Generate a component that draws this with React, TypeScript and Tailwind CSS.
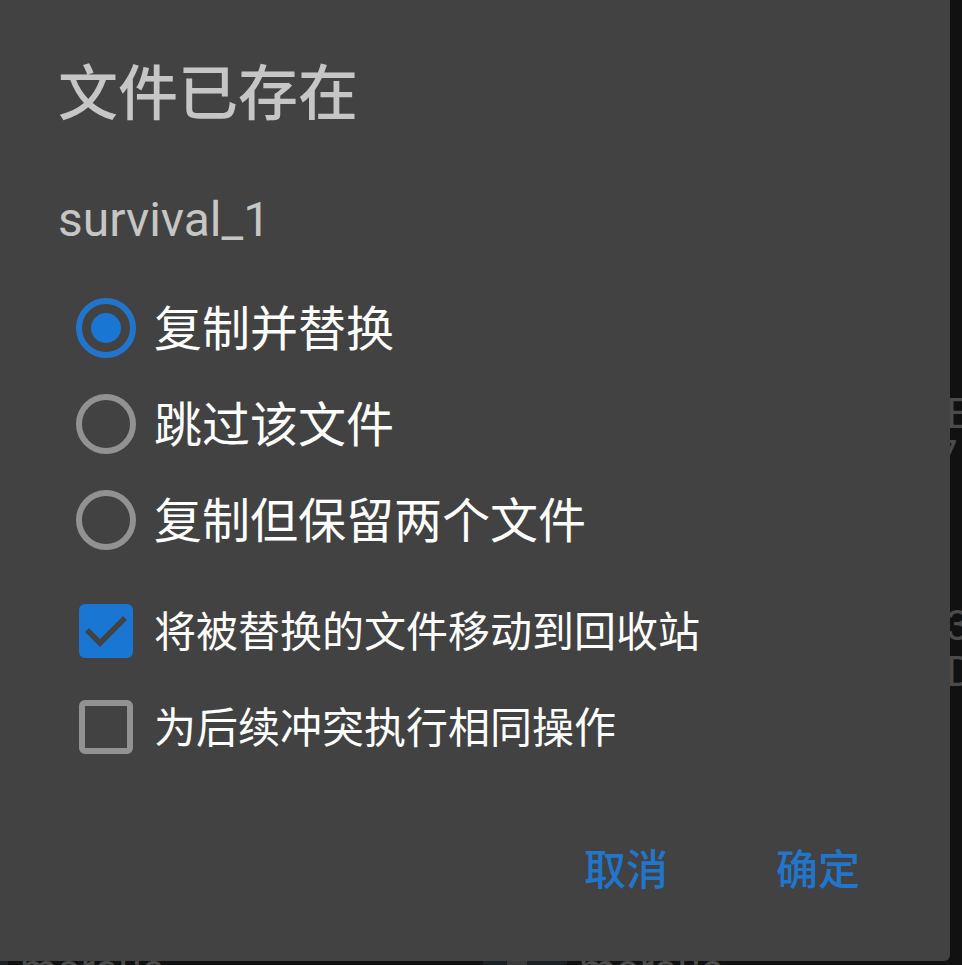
import { useState } from "react";

const conflictModes = [
  { id: "replace", label: "复制并替换" },
  { id: "skip", label: "跳过该文件" },
  { id: "keep-both", label: "复制但保留两个文件" },
];

function RadioRow({ id, label, checked, onSelect }: { id: string; label: string; checked: boolean; onSelect: () => void }) {
  return (
    <label htmlFor={id} className="flex h-24 cursor-pointer items-center gap-[18px] text-5xl leading-none text-white">
      <input
        id={id}
        type="radio"
        name="conflict-mode"
        checked={checked}
        onChange={onSelect}
        className="grid size-[60px] shrink-0 appearance-none place-content-center rounded-full border-[6px] border-[#929292] before:size-[30px] before:rounded-full before:bg-transparent checked:border-[#2176cc] checked:before:bg-[#1976d2]"
      />
      <span className="pt-1">{label}</span>
    </label>
  );
}

function CheckRow({ id, label, checked, onToggle }: { id: string; label: string; checked: boolean; onToggle: () => void }) {
  return (
    <label htmlFor={id} className="flex h-24 cursor-pointer items-center gap-[18px] text-[42px] leading-none text-white">
      <span className="relative grid size-[60px] shrink-0 place-items-center">
        <input
          id={id}
          type="checkbox"
          checked={checked}
          onChange={onToggle}
          className="size-[54px] appearance-none rounded-[6px] border-[6px] border-[#929292] checked:border-[#1976d2] checked:bg-[#1976d2]"
        />
        {checked && (
          <svg viewBox="0 0 54 54" aria-hidden="true" className="pointer-events-none absolute size-[54px]">
            <path d="M8 26L21 39L46 14" fill="none" stroke="#424242" strokeWidth="5.5" />
          </svg>
        )}
      </span>
      <span className="pt-1">{label}</span>
    </label>
  );
}

function Backdrop() {
  return (
    <div aria-hidden="true" className="absolute inset-0 flex flex-col justify-between overflow-hidden text-[42px] leading-none text-[#4b4b4b]">
      <div className="flex w-7 flex-col self-end pt-[393px]">
        <span className="pl-3">E</span>
        <span>7</span>
        <span className="pt-32 pl-3">3</span>
        <span className="pt-1 pl-3">D</span>
      </div>
      <div className="flex h-4 items-start">
        <span className="h-4 w-2 bg-[#1c2126]" />
        <span className="w-[475px] pl-3">morouc</span>
        <span className="h-4 w-6 bg-[#1c2126]" />
        <span className="h-4 w-5 bg-[#3a3a3a]" />
        <span className="h-4 w-10 bg-[#1c2126]" />
        <span className="pl-3">morouc</span>
      </div>
    </div>
  );
}

export default function App() {
  const [mode, setMode] = useState("replace");
  const [recycle, setRecycle] = useState(true);
  const [repeat, setRepeat] = useState(false);

  return (
    <div className="relative flex min-h-screen bg-[#111111] pr-3 pb-1 font-[Roboto,'Noto_Sans_CJK_SC',sans-serif]">
      <Backdrop />
      <form
        role="dialog"
        aria-labelledby="dialog-title"
        onSubmit={(e) => e.preventDefault()}
        className="relative flex-1 rounded-br-[6px] bg-[#424242] pt-[59px] pr-[60px] pb-10 pl-[58px]"
      >
        <h1 id="dialog-title" className="text-6xl leading-[72px] font-medium text-[#c6c6c6]">
          文件已存在
        </h1>
        <p className="mt-[61px] text-5xl leading-[56px] text-[#c6c6c6]">survival_1</p>
        <fieldset className="mt-8 pl-[18px]">
          {conflictModes.map((m) => (
            <RadioRow key={m.id} id={m.id} label={m.label} checked={mode === m.id} onSelect={() => setMode(m.id)} />
          ))}
        </fieldset>
        <div className="mt-[15px] pl-[18px]">
          <CheckRow id="recycle" label="将被替换的文件移动到回收站" checked={recycle} onToggle={() => setRecycle(!recycle)} />
          <CheckRow id="repeat" label="为后续冲突执行相同操作" checked={repeat} onToggle={() => setRepeat(!repeat)} />
        </div>
        <div className="mt-12 flex justify-end gap-12 text-[42px] leading-none font-medium text-[#2176cc]">
          <button type="button" className="h-24 w-36 cursor-pointer">取消</button>
          <button type="submit" className="h-24 w-36 cursor-pointer">确定</button>
        </div>
      </form>
    </div>
  );
}
